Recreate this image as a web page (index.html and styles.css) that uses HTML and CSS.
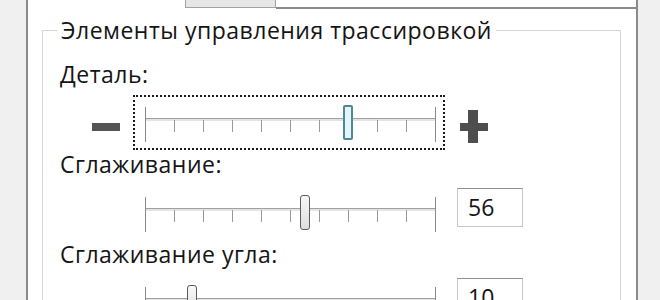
FILE: index.html
```html
<!DOCTYPE html>
<html lang="ru">
<head>
<meta charset="utf-8">
<link rel="stylesheet" href="styles.css">
</head>
<body>
<div class="screen">
  <div class="panel">
    <div class="tabs">
      <div class="tab-sel"></div>
      <div class="tab"></div>
      <div class="tab-rest"></div>
    </div>
    <fieldset class="group">
      <legend>Элементы управления трассировкой</legend>
      <div class="body">
        <div class="label">Деталь:</div>
        <div class="row">
          <div class="left">
            <svg class="minus" width="28" height="8" viewBox="0 0 28 8"><rect x="0" y="0" width="28" height="8" fill="#545454"/></svg>
          </div>
          <div class="focus on">
            <div class="slider">
              <div class="track"></div>
              <div class="ticks"><span class="end"></span><span></span><span></span><span></span><span></span><span></span><span></span><span></span><span></span><span></span><span class="end"></span></div>
              <div class="thumb active" style="margin-left:198px"></div>
            </div>
          </div>
          <svg class="plus" width="28" height="33" viewBox="0 0 28 33"><rect x="0" y="13" width="28" height="8" fill="#4e4e4e"/><rect x="8" y="0" width="10" height="33" fill="#4e4e4e"/></svg>
        </div>

        <div class="label">Сглаживание:</div>
        <div class="row">
          <div class="left"></div>
          <div class="focus">
            <div class="slider">
              <div class="track"></div>
              <div class="ticks"><span class="end"></span><span></span><span></span><span></span><span></span><span></span><span></span><span></span><span></span><span></span><span class="end"></span></div>
              <div class="thumb" style="margin-left:155px"></div>
            </div>
          </div>
          <div class="value">56</div>
        </div>

        <div class="label">Сглаживание угла:</div>
        <div class="row">
          <div class="left"></div>
          <div class="focus">
            <div class="slider">
              <div class="track"></div>
              <div class="ticks"><span class="end"></span><span></span><span></span><span></span><span></span><span></span><span></span><span></span><span></span><span></span><span class="end"></span></div>
              <div class="thumb" style="margin-left:42px"></div>
            </div>
          </div>
          <div class="value">10</div>
        </div>
      </div>
    </fieldset>
  </div>
</div>
</body>
</html>
```

FILE: styles.css
```css
html, body {
  margin: 0;
  padding: 0;
}
body {
  background: #f0f0f0;
  font-family: "Open Sans", "Noto Sans", sans-serif;
  color: #141414;
}
.screen {
  width: 660px;
  height: 300px;
  overflow: hidden;
}
.panel {
  margin-left: 26px;
  width: 608px;
  height: 420px;
  background: #fff;
  border-left: 2px solid #8a8a8a;
  border-right: 2px solid #8a8a8a;
}
.tabs {
  display: flex;
  height: 9px;
}
.tab-sel {
  width: 157px;
}
.tab {
  width: 89px;
  height: 7px;
  background: #e6e6e6;
  border: 1px solid #a2a2a2;
  border-top: none;
}
.tab-rest {
  flex: 1;
  height: 7px;
  border-bottom: 2px solid #8a8a8a;
}
.group {
  margin: 8px 15px 0 14px;
  padding: 0;
  border: 1px solid #d6d6d6;
  min-width: 0;
}
.group legend {
  margin-left: 14px;
  padding: 0 4px;
  font-size: 23px;
  letter-spacing: 0.5px;
  line-height: 26px;
}
.body {
  padding: 18px 0 40px 17px;
}
.label {
  font-size: 23px;
  letter-spacing: 0.5px;
  line-height: 26px;
  height: 26px;
  margin-top: 1px;
  white-space: nowrap;
}
.body > .label:first-child {
  margin-top: 0;
}
.row {
  display: flex;
  align-items: flex-start;
  height: 55px;
  margin-top: 8px;
}
.left {
  width: 28px;
  margin-left: 32px;
  margin-right: 13px;
  padding-top: 28px;
}
.minus {
  display: block;
}
.focus {
  box-sizing: border-box;
  width: 312px;
  height: 55px;
  border: 2px dotted transparent;
  padding: 8px 0 0 10px;
}
.focus.on {
  border-color: #1a1a1a;
}
.slider {
  display: grid;
  width: 291px;
  height: 37px;
}
.slider > * {
  grid-area: 1 / 1;
}
.track {
  align-self: start;
  margin-top: 13px;
  height: 2px;
  border-top: 1px solid #a0a0a0;
  background: #e4e4e4;
}
.ticks {
  display: flex;
  justify-content: space-between;
  align-items: flex-start;
  height: 37px;
}
.ticks span {
  width: 1px;
  height: 12px;
  margin-top: 15px;
  background: #9a9a9a;
}
.ticks span.end {
  height: 35px;
  margin-top: 2px;
  background: #8a8a8a;
}
.thumb {
  justify-self: start;
  align-self: start;
  box-sizing: border-box;
  width: 10px;
  height: 35px;
  border: 1px solid #5c5c5c;
  border-radius: 3px;
  background: linear-gradient(#f7f7f7, #dedede);
}
.thumb.active {
  border: 2px solid #4f8795;
  border-radius: 2px;
  background: #e4f5fa;
}
.plus {
  display: block;
  margin-left: 15px;
  margin-top: 15px;
}
.value {
  box-sizing: border-box;
  width: 66px;
  height: 39px;
  margin-left: 12px;
  margin-top: 3px;
  padding-left: 10px;
  border: 1px solid #c6c6c6;
  border-top-color: #8f8f8f;
  font-size: 23px;
  line-height: 37px;
}
```
